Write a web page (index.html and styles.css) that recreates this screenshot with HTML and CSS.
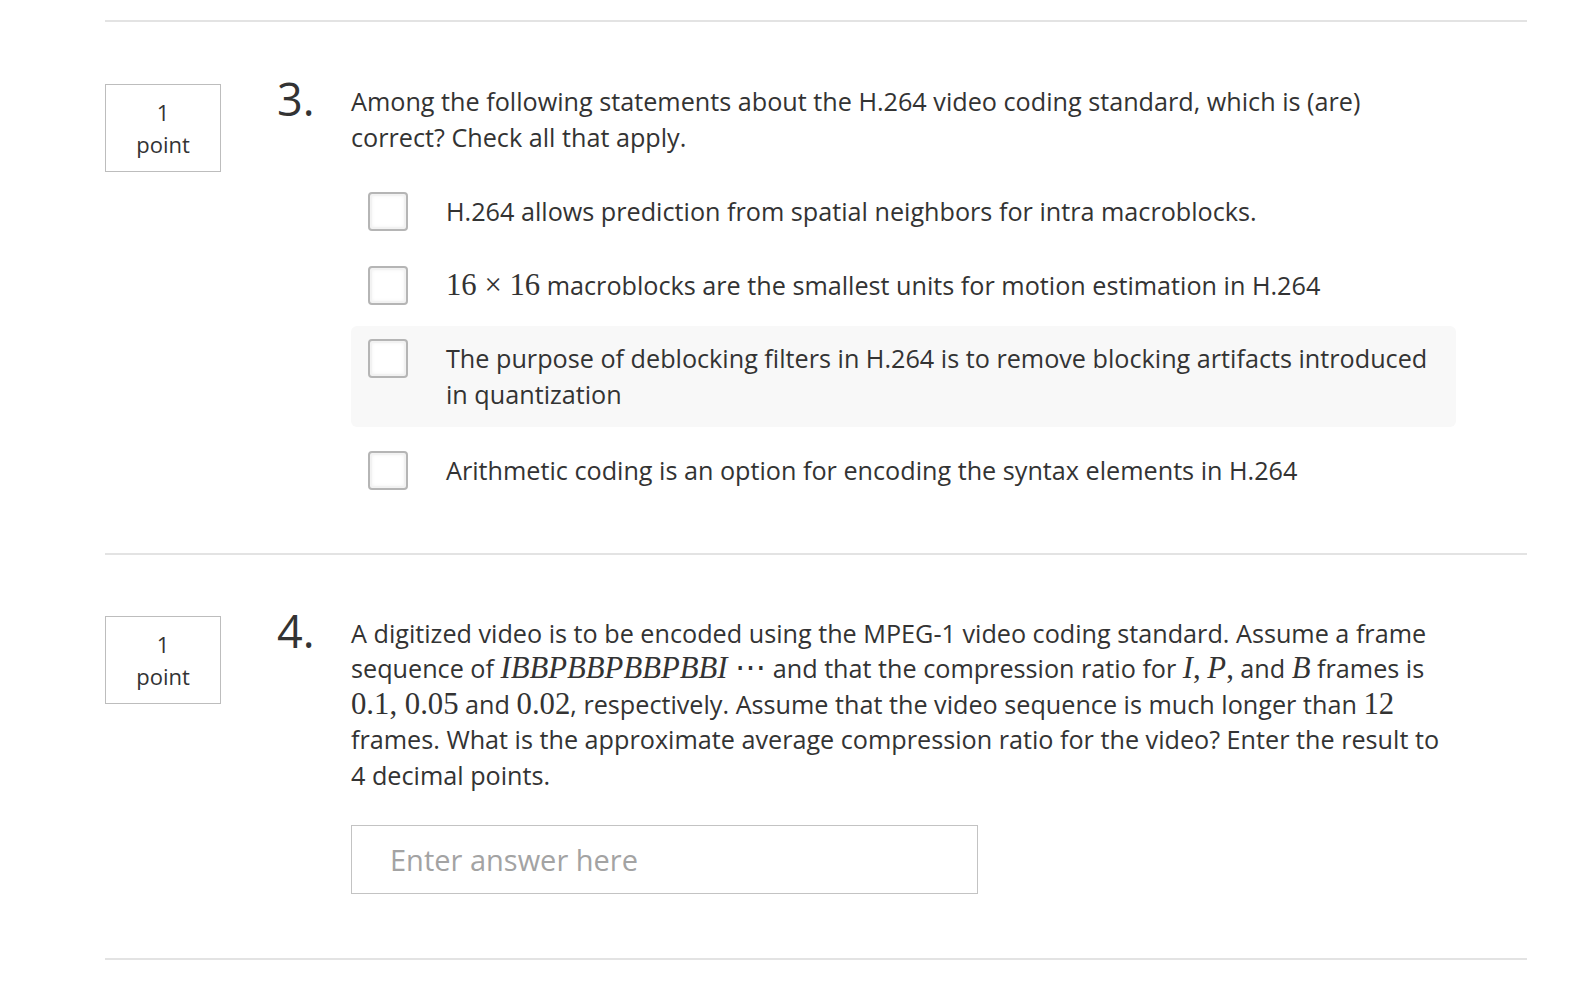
FILE: index.html
```html
<!DOCTYPE html>
<html lang="en">
<head>
<meta charset="utf-8">
<title>Quiz</title>
<link rel="stylesheet" href="styles.css">
</head>
<body>
<div class="page">
  <div class="sep"></div>

  <section class="question q3">
    <div class="points">1<br>point</div>
    <div class="num">3.</div>
    <div class="content">
      <div class="prompt">Among the following statements about the H.264 video coding standard, which is (are) correct? Check all that apply.</div>
      <div class="options">
        <label class="option"><span class="box"></span><span class="opt-text">H.264 allows prediction from spatial neighbors for intra macroblocks.</span></label>
        <label class="option"><span class="box"></span><span class="opt-text"><span class="math">16 × 16</span> macroblocks are the smallest units for motion estimation in H.264</span></label>
        <label class="option hover"><span class="box"></span><span class="opt-text">The purpose of deblocking filters in H.264 is to remove blocking artifacts introduced in quantization</span></label>
        <label class="option"><span class="box"></span><span class="opt-text">Arithmetic coding is an option for encoding the syntax elements in H.264</span></label>
      </div>
    </div>
  </section>

  <div class="sep"></div>

  <section class="question q4">
    <div class="points">1<br>point</div>
    <div class="num">4.</div>
    <div class="content">
      <div class="prompt">A digitized video is to be encoded using the MPEG-1 video coding standard. Assume a frame sequence of <span class="math"><i>IBBPBBPBBPBBI</i> ⋯</span> and that the compression ratio for <span class="math"><i>I</i>,</span> <span class="math"><i>P</i>,</span> and <span class="math"><i>B</i></span> frames is <span class="math">0.1, 0.05</span> and <span class="math">0.02</span>, respectively. Assume that the video sequence is much longer than <span class="math">12</span> frames. What is the approximate average compression ratio for the video? Enter the result to 4 decimal points.</div>
      <div class="answer">
        <input class="answer-input" type="text" placeholder="Enter answer here">
      </div>
    </div>
  </section>

  <div class="sep"></div>
</div>
</body>
</html>
```

FILE: styles.css
```css
html, body {
  margin: 0;
  padding: 0;
  background: #ffffff;
}

body {
  font-family: "Open Sans", "Noto Sans", sans-serif;
  color: #333333;
}

.page {
  width: 1422px;
  margin-left: 105px;
  padding-top: 20px;
}

.sep {
  height: 2px;
  background: #e3e3e3;
}

.question {
  display: grid;
  grid-template-columns: 116px 130px 1105px;
  align-items: start;
}

.q3 {
  padding: 62px 0 49px;
}

.q4 {
  padding: 61px 0 64px;
}

.points {
  box-sizing: border-box;
  width: 116px;
  height: 88px;
  border: 1px solid #bdbdbd;
  display: flex;
  align-items: center;
  justify-content: center;
  text-align: center;
  font-size: 22px;
  line-height: 32px;
  color: #333;
}

.num {
  margin-left: 56px;
  font-size: 45px;
  line-height: 26px;
  padding-top: 2px;
  color: #333;
}

.content {
  font-size: 25.2px;
  line-height: 35.5px;
}

.prompt {
  color: #333;
  padding-right: 10px;
}

.options {
  margin-top: 24px;
  display: flex;
  flex-direction: column;
  gap: 8px;
}

.option {
  display: flex;
  align-items: flex-start;
  padding: 15px 16px 15px 17px;
  border-radius: 6px;
}

.option.hover {
  background: #f8f8f8;
}

.option:last-child {
  margin-top: 3px;
}

.box {
  flex: none;
  box-sizing: border-box;
  width: 40px;
  height: 39px;
  margin: -2px 0 -2px;
  border: 2px solid #b5b5b5;
  border-radius: 4px;
  background: #fff;
  box-shadow: inset 0 0 0 2px #f2f2f2, inset 0 0 5px rgba(0, 0, 0, 0.12);
}

.opt-text {
  margin-left: 38px;
}

.math {
  font-family: "Liberation Serif", "DejaVu Serif", serif;
  font-size: 1.22em;
  line-height: 0;
}

.math i {
  font-style: italic;
}

.answer {
  margin-top: 32px;
}

.answer-input {
  display: block;
  box-sizing: border-box;
  width: 627px;
  height: 69px;
  border: 1px solid #c3c3c3;
  border-radius: 0;
  padding: 0 20px 0 38px;
  font-family: "Open Sans", "Noto Sans", sans-serif;
  font-size: 29px;
  color: #333;
  outline: none;
  background: #fff;
}

.answer-input::placeholder {
  color: #a3a3a3;
}
```
